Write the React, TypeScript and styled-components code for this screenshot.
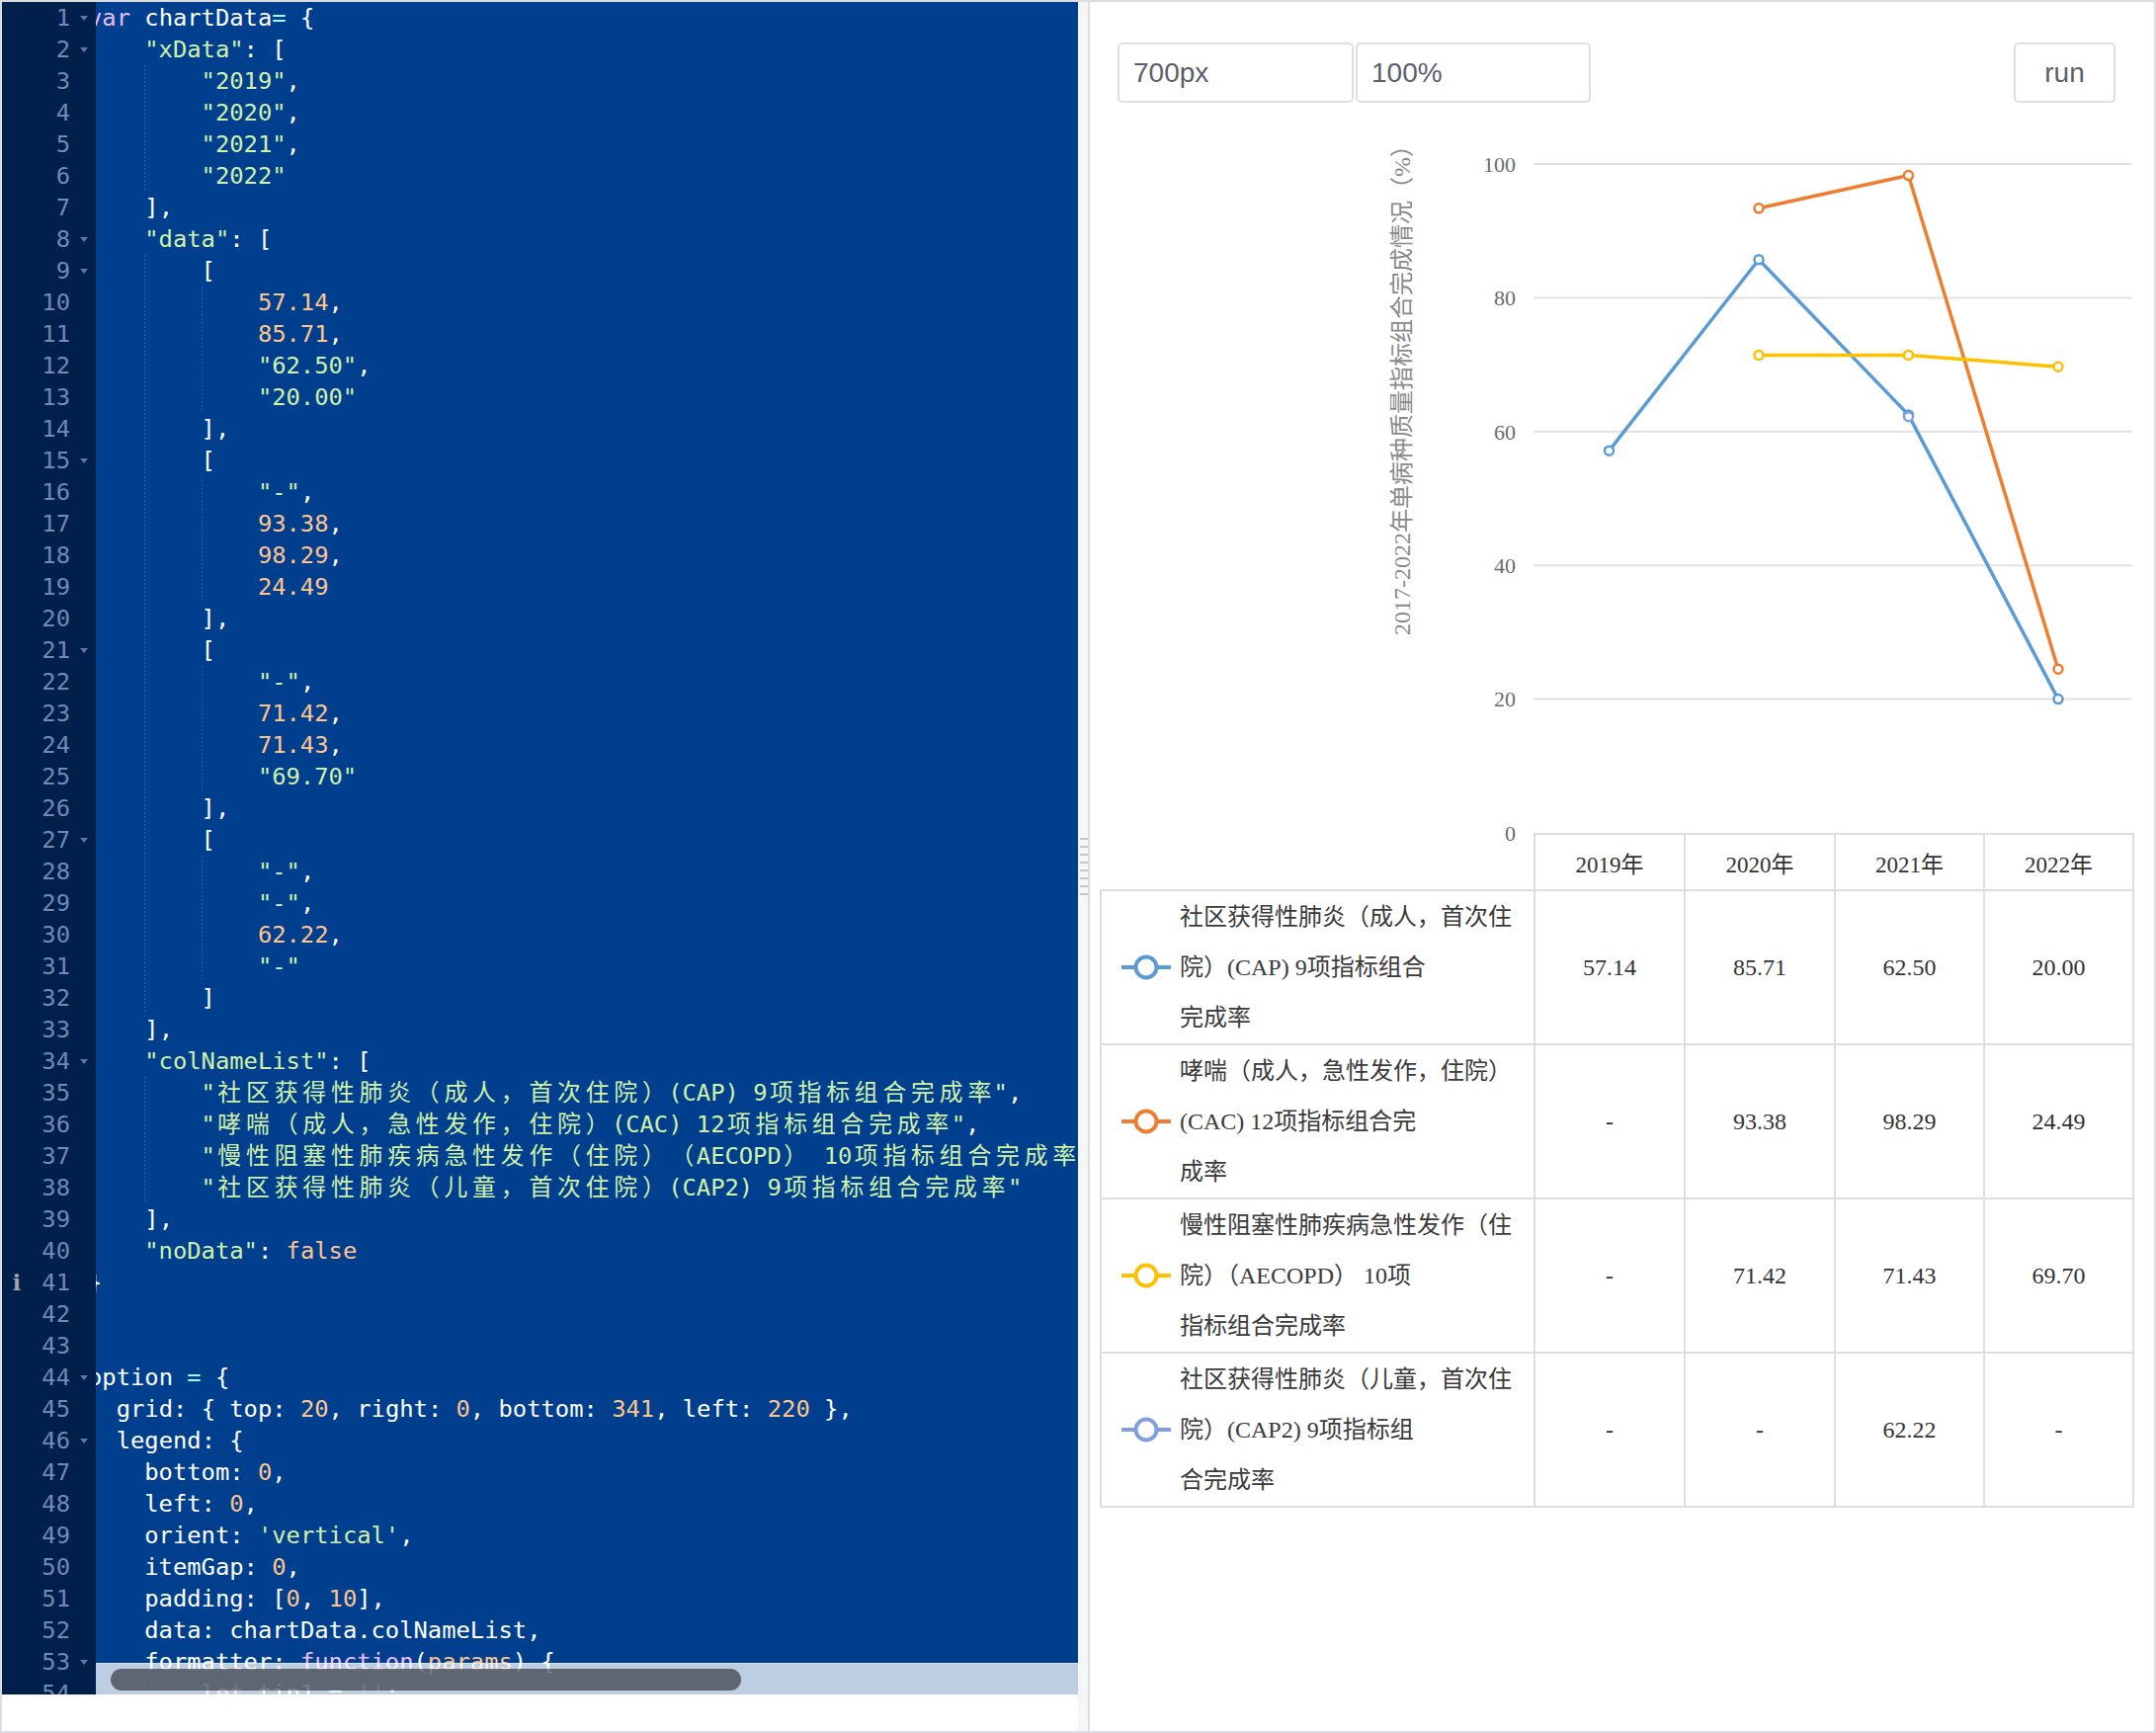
import React from "react";
import styled, { createGlobalStyle } from "styled-components";

const GlobalStyle = createGlobalStyle`
  html, body { margin: 0; padding: 0; background: #fff; }
  body { width: 2182px; height: 1754px; overflow: hidden; }
`;

// ace "tomorrow night blue" colours, whole text selected
const C = {
  text: "#ffffff",
  string: "#d1f1a9",
  number: "#ffc58f",
  keyword: "#ebbbff",
  operator: "#99ffff",
};

const CODE: string[] = [
  "var chartData= {",
  '    "xData": [',
  '        "2019",',
  '        "2020",',
  '        "2021",',
  '        "2022"',
  "    ],",
  '    "data": [',
  "        [",
  "            57.14,",
  "            85.71,",
  '            "62.50",',
  '            "20.00"',
  "        ],",
  "        [",
  '            "-",',
  "            93.38,",
  "            98.29,",
  "            24.49",
  "        ],",
  "        [",
  '            "-",',
  "            71.42,",
  "            71.43,",
  '            "69.70"',
  "        ],",
  "        [",
  '            "-",',
  '            "-",',
  "            62.22,",
  '            "-"',
  "        ]",
  "    ],",
  '    "colNameList": [',
  '        "社区获得性肺炎（成人，首次住院）(CAP) 9项指标组合完成率",',
  '        "哮喘（成人，急性发作，住院）(CAC) 12项指标组合完成率",',
  '        "慢性阻塞性肺疾病急性发作（住院）（AECOPD） 10项指标组合完成率",',
  '        "社区获得性肺炎（儿童，首次住院）(CAP2) 9项指标组合完成率"',
  "    ],",
  '    "noData": false',
  "}",
  "",
  "",
  "option = {",
  "  grid: { top: 20, right: 0, bottom: 341, left: 220 },",
  "  legend: {",
  "    bottom: 0,",
  "    left: 0,",
  "    orient: 'vertical',",
  "    itemGap: 0,",
  "    padding: [0, 10],",
  "    data: chartData.colNameList,",
  "    formatter: function(params) {",
  "        let tip1 = '';",
];

const FOLDS = new Set([1, 2, 8, 9, 15, 21, 27, 34, 44, 46, 53]);

const Frame = styled.div`
  box-sizing: border-box;
  width: 2182px;
  height: 1754px;
  border: 2px solid #dcdde3;
  display: flex;
  background: #fff;
`;

const LeftPane = styled.div`
  width: 1089px;
  flex: none;
  display: flex;
  flex-direction: column;
`;

const Editor = styled.div`
  height: 1713px;
  display: flex;
  background: #003f8e;
  overflow: hidden;
  font-family: "DejaVu Sans Mono", "Noto Sans CJK SC", monospace;
  font-size: 23.8px;
  line-height: 32px;
`;

const Gutter = styled.div`
  width: 95px;
  flex: none;
  background: #00204b;
  color: #7388b5;
`;

const GutterRow = styled.div`
  display: flex;
  align-items: center;
  height: 32px;
`;

const Annot = styled.span`
  width: 30px;
  flex: none;
  text-align: center;
  color: #a0a4ad;
  font-family: "DejaVu Serif", serif;
  font-weight: bold;
  font-size: 22px;
`;

const LineNo = styled.span`
  width: 39px;
  flex: none;
  text-align: right;
`;

const Fold = styled.span<{ $show: boolean }>`
  width: 26px;
  flex: none;
  display: flex;
  align-items: center;
  &::after {
    content: "";
    display: ${(p) => (p.$show ? "block" : "none")};
    margin-left: 10px;
    border-left: 4px solid transparent;
    border-right: 4px solid transparent;
    border-top: 5px solid #64779f;
  }
`;

const Code = styled.div`
  position: relative;
  flex: 1;
  overflow: hidden;
`;

const CodeInner = styled.div`
  margin-left: -8px;
  white-space: pre;
  color: ${C.text};
`;

const CodeLine = styled.div`
  height: 32px;
`;

const Tok = styled.span<{ $c: string }>`
  color: ${(p) => p.$c};
`;

const Wide = styled.span`
  display: inline-block;
  width: 2ch;
  text-align: center;
`;

const Guide = styled.span`
  display: inline-block;
  width: 4ch;
  height: 32px;
  vertical-align: top;
  background: repeating-linear-gradient(
      to bottom,
      rgba(255, 255, 255, 0.16) 0 2px,
      transparent 2px 4px
    )
    left top / 1px 100% no-repeat;
`;

const ScrollTrack = styled.div`
  position: absolute;
  left: 0;
  right: 0;
  bottom: 0;
  height: 31px;
  background: rgba(255, 255, 255, 0.74);
  border-top: 1px solid rgba(255, 255, 255, 0.4);
`;

const ScrollThumb = styled.div`
  position: absolute;
  left: 15px;
  top: 5px;
  width: 638px;
  height: 22px;
  border-radius: 11px;
  background: rgba(0, 0, 0, 0.5);
`;

const Splitter = styled.div`
  width: 10px;
  flex: none;
  background: #f6f6f7;
  border-right: 2px solid #dcdde3;
  display: flex;
  flex-direction: column;
  justify-content: center;
  align-items: flex-end;
  gap: 6px;
`;

const Grip = styled.span`
  width: 8px;
  height: 2px;
  background: #c3c6cf;
`;

const RightPane = styled.div`
  flex: 1;
  padding: 41px 22px 0 10px;
  display: flex;
  flex-direction: column;
  font-family: "Liberation Serif", "Noto Sans CJK SC", serif;
`;

const Toolbar = styled.div`
  display: flex;
  align-items: center;
  gap: 2px;
  height: 61px;
  margin-left: 18px;
`;

const SizeInput = styled.input<{ $w: number }>`
  box-sizing: border-box;
  width: ${(p) => p.$w}px;
  height: 61px;
  border: 2px solid #dcdfe6;
  border-radius: 5px;
  padding: 0 14px;
  font-family: "Liberation Sans", Arial, sans-serif;
  font-size: 28px;
  color: #5a5f6b;
  outline: none;
  background: #fff;
`;

const RunButton = styled.button`
  box-sizing: border-box;
  margin-left: auto;
  margin-right: 19px;
  width: 103px;
  height: 61px;
  border: 2px solid #dcdfe6;
  border-radius: 5px;
  background: #fff;
  font-family: "Liberation Sans", Arial, sans-serif;
  font-size: 28px;
  color: #5a5f6b;
`;

const ChartSvg = styled.svg`
  display: block;
  margin-top: 26px;
  overflow: visible;
`;

const Table = styled.table`
  width: 1045px;
  table-layout: fixed;
  border-collapse: collapse;
  color: #333;
  font-size: 24px;

  td, th {
    border: 2px solid #dedede;
    padding: 0;
    font-weight: normal;
    text-align: center;
  }
  th:first-child {
    border: none;
  }
`;

const HeadCell = styled.th`
  height: 55px;
  font-size: 23px;
`;

const BodyRow = styled.tr`
  height: 156px;
`;

const LegendCell = styled.div`
  display: flex;
  align-items: center;
  text-align: left;
`;

const LegendText = styled.div`
  margin-left: 9px;
  font-size: 24px;
  line-height: 51px;
  color: #3a3a3a;
  white-space: nowrap;
`;

const LegendIcon = styled.svg`
  flex: none;
  margin-left: 20px;
`;

const isWide = (ch: string) => /[\u2e80-\u9fff\u3000-\u303f\uff00-\uffef]/.test(ch);

function renderChars(s: string) {
  const out: React.ReactNode[] = [];
  let buf = "";
  [...s].forEach((ch, i) => {
    if (isWide(ch)) {
      if (buf) out.push(buf);
      buf = "";
      out.push(<Wide key={i}>{ch}</Wide>);
    } else buf += ch;
  });
  if (buf) out.push(buf);
  return out;
}

const TOKEN = /("[^"]*"|'[^']*'|\d+(?:\.\d+)?|[A-Za-z_$][\w$]*|\s+|.)/g;

function colorOf(t: string) {
  if (t[0] === '"' || t[0] === "'") return C.string;
  if (/^\d/.test(t)) return C.number;
  if (t === "var" || t === "function" || t === "let") return C.keyword;
  if (t === "false" || t === "params") return C.number;
  if (t === "=") return C.operator;
  return C.text;
}

function CodeRow({ src }: { src: string }) {
  const lead = src.match(/^ */)![0].length;
  const guides = Math.floor(lead / 4);
  const rest = src.slice(guides * 4);
  const toks = rest.match(TOKEN) || [];
  return (
    <CodeLine>
      {Array.from({ length: guides }, (_, i) => (
        <Guide key={"g" + i} />
      ))}
      {toks.map((t, i) => (
        <Tok key={i} $c={colorOf(t)}>
          {renderChars(t)}
        </Tok>
      ))}
    </CodeLine>
  );
}

const YEARS = ["2019年", "2020年", "2021年", "2022年"];
const XS = [515.5, 667, 818.5, 970];
const yOf = (v: number) => 713 - v * 6.77;

type Series = {
  color: string;
  lines: string[];
  values: (number | null)[];
  cells: string[];
};

const SERIES: Series[] = [
  {
    color: "#5b9bd5",
    lines: ["社区获得性肺炎（成人，首次住", "院）(CAP) 9项指标组合", "完成率"],
    values: [57.14, 85.71, 62.5, 20.0],
    cells: ["57.14", "85.71", "62.50", "20.00"],
  },
  {
    color: "#ed7d31",
    lines: ["哮喘（成人，急性发作，住院）", "(CAC) 12项指标组合完", "成率"],
    values: [null, 93.38, 98.29, 24.49],
    cells: ["-", "93.38", "98.29", "24.49"],
  },
  {
    color: "#ffc000",
    lines: ["慢性阻塞性肺疾病急性发作（住", "院）（AECOPD） 10项", "指标组合完成率"],
    values: [null, 71.42, 71.43, 69.7],
    cells: ["-", "71.42", "71.43", "69.70"],
  },
  {
    color: "#7f9fe0",
    lines: ["社区获得性肺炎（儿童，首次住", "院）(CAP2) 9项指标组", "合完成率"],
    values: [null, null, 62.22, null],
    cells: ["-", "-", "62.22", "-"],
  },
];

function Chart() {
  const ticks = [100, 80, 60, 40, 20];
  return (
    <ChartSvg width={1045} height={713} viewBox="0 0 1045 713">
      {ticks.map((t) => (
        <line key={t} x1={439} x2={1045} y1={yOf(t)} y2={yOf(t)} stroke="#e2e2e2" strokeWidth={2} />
      ))}
      {[...ticks, 0].map((t) => (
        <text
          key={"l" + t}
          x={421}
          y={yOf(t)}
          dy="0.35em"
          textAnchor="end"
          fontFamily="Liberation Serif, serif"
          fontSize={22}
          fill="#6b6b6b"
        >
          {t}
        </text>
      ))}
      <text
        transform="translate(306 259) rotate(-90)"
        textAnchor="middle"
        dy="0.35em"
        fontFamily="Liberation Serif, Noto Sans CJK SC, serif"
        fontSize={24}
        fill="#8a8a8a"
      >
        2017-2022年单病种质量指标组合完成情况（%）
      </text>
      {SERIES.map((s, si) => {
        const pts = s.values
          .map((v, i) => (v == null ? null : `${XS[i]},${yOf(v)}`))
          .filter(Boolean)
          .join(" ");
        return (
          <g key={si}>
            <polyline points={pts} fill="none" stroke={s.color} strokeWidth={3.5} strokeLinejoin="round" />
            {s.values.map((v, i) =>
              v == null ? null : (
                <circle key={i} cx={XS[i]} cy={yOf(v)} r={4.5} fill="#fff" stroke={s.color} strokeWidth={2.5} />
              )
            )}
          </g>
        );
      })}
    </ChartSvg>
  );
}

export default function App() {
  return (
    <>
      <GlobalStyle />
      <Frame>
        <LeftPane>
          <Editor>
            <Gutter>
              {CODE.map((_, i) => (
                <GutterRow key={i}>
                  <Annot>{i + 1 === 41 ? "i" : ""}</Annot>
                  <LineNo>{i + 1}</LineNo>
                  <Fold $show={FOLDS.has(i + 1)} />
                </GutterRow>
              ))}
            </Gutter>
            <Code>
              <CodeInner>
                {CODE.map((src, i) => (
                  <CodeRow key={i} src={src} />
                ))}
              </CodeInner>
              <ScrollTrack>
                <ScrollThumb />
              </ScrollTrack>
            </Code>
          </Editor>
        </LeftPane>
        <Splitter>
          {Array.from({ length: 8 }, (_, i) => (
            <Grip key={i} />
          ))}
        </Splitter>
        <RightPane>
          <Toolbar>
            <SizeInput $w={239} defaultValue="700px" readOnly />
            <SizeInput $w={238} defaultValue="100%" readOnly />
            <RunButton>run</RunButton>
          </Toolbar>
          <Chart />
          <Table>
            <colgroup>
              <col style={{ width: 439 }} />
              <col style={{ width: 152 }} />
              <col style={{ width: 152 }} />
              <col style={{ width: 151 }} />
              <col style={{ width: 151 }} />
            </colgroup>
            <thead>
              <tr>
                <HeadCell />
                {YEARS.map((y) => (
                  <HeadCell key={y}>{y}</HeadCell>
                ))}
              </tr>
            </thead>
            <tbody>
              {SERIES.map((s, si) => (
                <BodyRow key={si}>
                  <td>
                    <LegendCell>
                      <LegendIcon width={50} height={28} viewBox="0 0 50 28">
                        <line x1={0} x2={50} y1={14} y2={14} stroke={s.color} strokeWidth={4} />
                        <circle cx={25} cy={14} r={10.5} fill="#fff" stroke={s.color} strokeWidth={4} />
                      </LegendIcon>
                      <LegendText>
                        {s.lines.map((l, li) => (
                          <div key={li}>{l}</div>
                        ))}
                      </LegendText>
                    </LegendCell>
                  </td>
                  {s.cells.map((c, ci) => (
                    <td key={ci}>{c}</td>
                  ))}
                </BodyRow>
              ))}
            </tbody>
          </Table>
        </RightPane>
      </Frame>
    </>
  );
}
